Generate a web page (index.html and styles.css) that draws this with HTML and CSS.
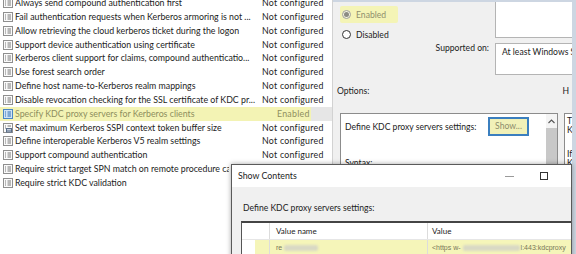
FILE: index.html
```html
<!DOCTYPE html>
<html>
<head>
<meta charset="utf-8">
<link rel="stylesheet" href="styles.css">
</head>
<body>
<div class="screen">
  <div class="list">
    <div class="rows">
      <div class="row"><svg class="ico" viewBox="0 0 10 10"><rect x="0.5" y="0.5" width="9" height="9" fill="#fafafa" stroke="#8f8f8f"/><path d="M2 3h1M2 5h1M2 7h1M4.5 3h3.5M4.5 5h3.5M4.5 7h3.5" stroke="#777"/></svg><span class="name">Always send compound authentication first</span><span class="state">Not configured</span></div>
      <div class="row"><svg class="ico" viewBox="0 0 10 10"><rect x="0.5" y="0.5" width="9" height="9" fill="#fafafa" stroke="#8f8f8f"/><path d="M2 3h1M2 5h1M2 7h1M4.5 3h3.5M4.5 5h3.5M4.5 7h3.5" stroke="#777"/></svg><span class="name">Fail authentication requests when Kerberos armoring is not ...</span><span class="state">Not configured</span></div>
      <div class="row"><svg class="ico" viewBox="0 0 10 10"><rect x="0.5" y="0.5" width="9" height="9" fill="#fafafa" stroke="#8f8f8f"/><path d="M2 3h1M2 5h1M2 7h1M4.5 3h3.5M4.5 5h3.5M4.5 7h3.5" stroke="#777"/></svg><span class="name">Allow retrieving the cloud kerberos ticket during the logon</span><span class="state">Not configured</span></div>
      <div class="row"><svg class="ico" viewBox="0 0 10 10"><rect x="0.5" y="0.5" width="9" height="9" fill="#fafafa" stroke="#8f8f8f"/><path d="M2 3h1M2 5h1M2 7h1M4.5 3h3.5M4.5 5h3.5M4.5 7h3.5" stroke="#777"/></svg><span class="name">Support device authentication using certificate</span><span class="state">Not configured</span></div>
      <div class="row"><svg class="ico" viewBox="0 0 10 10"><rect x="0.5" y="0.5" width="9" height="9" fill="#fafafa" stroke="#8f8f8f"/><path d="M2 3h1M2 5h1M2 7h1M4.5 3h3.5M4.5 5h3.5M4.5 7h3.5" stroke="#777"/></svg><span class="name">Kerberos client support for claims, compound authenticatio...</span><span class="state">Not configured</span></div>
      <div class="row"><svg class="ico" viewBox="0 0 10 10"><rect x="0.5" y="0.5" width="9" height="9" fill="#fafafa" stroke="#8f8f8f"/><path d="M2 3h1M2 5h1M2 7h1M4.5 3h3.5M4.5 5h3.5M4.5 7h3.5" stroke="#777"/></svg><span class="name">Use forest search order</span><span class="state">Not configured</span></div>
      <div class="row"><svg class="ico" viewBox="0 0 10 10"><rect x="0.5" y="0.5" width="9" height="9" fill="#fafafa" stroke="#8f8f8f"/><path d="M2 3h1M2 5h1M2 7h1M4.5 3h3.5M4.5 5h3.5M4.5 7h3.5" stroke="#777"/></svg><span class="name">Define host name-to-Kerberos realm mappings</span><span class="state">Not configured</span></div>
      <div class="row"><svg class="ico" viewBox="0 0 10 10"><rect x="0.5" y="0.5" width="9" height="9" fill="#fafafa" stroke="#8f8f8f"/><path d="M2 3h1M2 5h1M2 7h1M4.5 3h3.5M4.5 5h3.5M4.5 7h3.5" stroke="#777"/></svg><span class="name">Disable revocation checking for the SSL certificate of KDC pr...</span><span class="state">Not configured</span></div>
      <div class="row sel"><svg class="ico" viewBox="0 0 10 10"><rect x="0.5" y="0.5" width="9" height="9" fill="#cfe2f5" stroke="#4a86c4"/><path d="M2 3h1M2 5h1M2 7h1M4.5 3h3.5M4.5 5h3.5M4.5 7h3.5" stroke="#2f6fb3"/></svg><span class="name">Specify KDC proxy servers for Kerberos clients</span><span class="state">Enabled</span></div>
      <div class="row"><svg class="ico" viewBox="0 0 10 10"><rect x="0.5" y="0.5" width="9" height="9" fill="#fafafa" stroke="#8f8f8f"/><path d="M2 3h1M2 5h1M4.5 3h3.5" stroke="#777"/><rect x="3" y="5" width="6" height="4.5" fill="#5a6f8a"/><path d="M4 6.5h4M4 8h4" stroke="#dfe6ef" stroke-width="0.8"/></svg><span class="name">Set maximum Kerberos SSPI context token buffer size</span><span class="state">Not configured</span></div>
      <div class="row"><svg class="ico" viewBox="0 0 10 10"><rect x="0.5" y="0.5" width="9" height="9" fill="#fafafa" stroke="#8f8f8f"/><path d="M2 3h1M2 5h1M2 7h1M4.5 3h3.5M4.5 5h3.5M4.5 7h3.5" stroke="#777"/></svg><span class="name">Define interoperable Kerberos V5 realm settings</span><span class="state">Not configured</span></div>
      <div class="row"><svg class="ico" viewBox="0 0 10 10"><rect x="0.5" y="0.5" width="9" height="9" fill="#fafafa" stroke="#8f8f8f"/><path d="M2 3h1M2 5h1M2 7h1M4.5 3h3.5M4.5 5h3.5M4.5 7h3.5" stroke="#777"/></svg><span class="name">Support compound authentication</span><span class="state">Not configured</span></div>
      <div class="row"><svg class="ico" viewBox="0 0 10 10"><rect x="0.5" y="0.5" width="9" height="9" fill="#fafafa" stroke="#8f8f8f"/><path d="M2 3h1M2 5h1M2 7h1M4.5 3h3.5M4.5 5h3.5M4.5 7h3.5" stroke="#777"/></svg><span class="name short">Require strict target SPN match on remote procedure calls</span></div>
      <div class="row"><svg class="ico" viewBox="0 0 10 10"><rect x="0.5" y="0.5" width="9" height="9" fill="#fafafa" stroke="#8f8f8f"/><path d="M2 3h1M2 5h1M2 7h1M4.5 3h3.5M4.5 5h3.5M4.5 7h3.5" stroke="#777"/></svg><span class="name short">Require strict KDC validation</span></div>
    </div>
  </div>

  <div class="panel">
    <div class="sec1">
      <div class="radios">
        <div class="radio on"><span class="rb"><span class="dot"></span></span><span>Enabled</span></div>
        <div class="radio"><span class="rb"></span><span>Disabled</span></div>
      </div>
      <div class="comment"></div>
    </div>
    <div class="sec2">
      <div class="sup-label">Supported on:</div>
      <div class="sup-box">At least Windows S</div>
    </div>
    <div class="sec3">
      <span>Options:</span>
      <span class="help-label">H</span>
    </div>
    <div class="sec4">
      <div class="options">
        <div class="opt-main">
          <div class="opt-row">
            <span class="opt-label">Define KDC proxy servers settings:</span>
            <span class="show-btn">Show...</span>
          </div>
          <div class="syntax">Syntax:</div>
        </div>
        <div class="sbar">
          <div class="arrow"><svg width="7" height="5" viewBox="0 0 7 5"><path d="M0.5 4L3.5 1L6.5 4" fill="none" stroke="#555" stroke-width="1.1"/></svg></div>
          <div class="thumb"></div>
        </div>
      </div>
      <div class="help">
        <p>T</p>
        <p>K</p>
        <p class="gap">If</p>
        <p>K</p>
      </div>
    </div>
  </div>

  <div class="edge"></div>

  <div class="dialog">
    <div class="titlebar">
      <span class="title">Show Contents</span>
      <span class="min"></span>
      <span class="max"></span>
    </div>
    <div class="dbody">
      <div class="dlabel">Define KDC proxy servers settings:</div>
      <div class="table">
        <div class="thead">
          <span class="c0"></span>
          <span class="c1">Value name</span>
          <span class="c2">Value</span>
        </div>
        <div class="trow">
          <span class="c0"></span>
          <span class="c1 val">re<span class="blur b1"></span></span>
          <span class="c2 val">&lt;https w-<span class="blur b2"></span>l:443:kdcproxy</span>
        </div>
      </div>
    </div>
  </div>
</div>
</body>
</html>
```

FILE: styles.css
```css
* {
  box-sizing: border-box;
  margin: 0;
  padding: 0;
}

body {
  margin: 0;
  width: 576px;
  height: 254px;
  overflow: hidden;
  background: #fff;
  font-family: Lato, "Noto Sans", sans-serif;
  font-size: 8.8px;
  line-height: 10px;
  color: #1c1c1c;
}

.screen {
  position: relative;
  display: flex;
  width: 576px;
  height: 254px;
  overflow: hidden;
}

/* ---------- policy list ---------- */
.list {
  width: 333px;
  flex: none;
  overflow: hidden;
  background: #fff;
  border-right: 1px solid #d2d2d2;
}

.rows {
  margin-top: -3.9px;
}

.row {
  display: flex;
  align-items: center;
  height: 13.85px;
  white-space: nowrap;
}

.ico {
  width: 10px;
  height: 10px;
  flex: none;
  margin: 0 2px 0 3px;
}

.name {
  width: 247px;
  flex: none;
  overflow: hidden;
}

.name.short {
  width: 214px;
}

.state {
  flex: none;
  letter-spacing: 0.25px;
}

.row.sel {
  background: linear-gradient(90deg, #f3f3b4 0, #f3f3b4 311px, #e6e6e6 311px);
  color: #8e8e5e;
}

.row.sel .state {
  padding-left: 15px;
}

/* ---------- policy setting panel ---------- */
.panel {
  width: 239px;
  flex: none;
  background: #f0f0f0;
  border-top: 2px solid #cdd6e2;
  overflow: hidden;
  font-size: 8.6px;
}

.edge {
  width: 4px;
  flex: none;
  background: #cdd6e2;
}

.sec1 {
  display: flex;
  height: 39px;
}

.radios {
  width: 162px;
  flex: none;
  padding-top: 4px;
}

.radio {
  display: flex;
  align-items: center;
  gap: 5px;
  height: 17px;
  margin-left: 7px;
  padding-left: 2px;
  width: 58px;
}

.radio + .radio {
  margin-top: 3px;
}

.radio.on {
  background: #f4f4b6;
  color: #8f8f6c;
  border-radius: 2px;
}

.rb {
  width: 9px;
  height: 9px;
  flex: none;
  border-radius: 50%;
  border: 1px solid #333;
  background: #fff;
  display: flex;
  align-items: center;
  justify-content: center;
}

.radio.on .rb {
  border-color: #a0a09a;
  background: #f4f4e0;
}

.dot {
  width: 5px;
  height: 5px;
  border-radius: 50%;
  background: #8c8c84;
}

.comment {
  width: 77px;
  height: 36px;
  flex: none;
  background: #fff;
  border: 1px solid #b4b4b4;
  border-top: 0;
  border-right: 0;
}

.sec2 {
  display: flex;
  height: 36px;
  padding-top: 2px;
}

.sup-label {
  width: 162px;
  flex: none;
  text-align: right;
  padding-right: 6px;
}

.sup-box {
  width: 77px;
  height: 32px;
  flex: none;
  background: #fff;
  border: 1px solid #b4b4b4;
  border-right: 0;
  padding: 3px 0 0 6px;
  white-space: nowrap;
  overflow: hidden;
}

.sec3 {
  display: flex;
  justify-content: space-between;
  height: 29px;
  padding: 9px 3px 0 4px;
}

.sec4 {
  display: flex;
  padding-top: 7px;
}

.options {
  display: flex;
  width: 218px;
  height: 70px;
  margin-left: 7px;
  flex: none;
  background: #fff;
  border: 1px solid #8c8c8c;
}

.opt-main {
  flex: 1;
  padding: 3px 0 0 4px;
  white-space: nowrap;
}

.opt-row {
  display: flex;
  align-items: center;
  height: 19px;
}

.opt-label {
  width: 143px;
  flex: none;
}

.show-btn {
  width: 41px;
  height: 19px;
  flex: none;
  text-align: center;
  line-height: 15px;
  background: #f1f1b8;
  color: #8d8d6c;
  border: 2px solid #3b7fbf;
}

.syntax {
  margin-top: 22px;
}

.sbar {
  width: 11px;
  flex: none;
  display: flex;
  flex-direction: column;
}

.arrow {
  height: 14px;
  display: flex;
  align-items: center;
  justify-content: center;
  background: #f4f4f4;
}

.thumb {
  flex: 1;
  background: #c8c8c8;
}

.help {
  width: 8px;
  height: 70px;
  margin-left: 6px;
  flex: none;
  background: #fff;
  border: 1px solid #8c8c8c;
  border-right: 0;
  padding: 3px 0 0 2px;
  overflow: hidden;
  line-height: 9px;
}

.help .gap {
  margin-top: 15px;
}

/* ---------- Show Contents dialog ---------- */
.dialog {
  position: absolute;
  z-index: 2;
  left: 231px;
  top: 164px;
  width: 341px;
  height: 95px;
  background: #f0f0f0;
  border: 1px solid #5a5a5a;
  box-shadow: 0 0 5px rgba(0, 0, 0, 0.35);
  font-size: 8.6px;
}

.titlebar {
  display: flex;
  align-items: center;
  height: 22px;
  background: #fff;
  padding-left: 6px;
  font-size: 8.8px;
}

.title {
  flex: 1;
}

.min {
  width: 9px;
  height: 1px;
  background: #9a9a9a;
  margin-right: 26px;
}

.max {
  width: 8px;
  height: 8px;
  border: 1px solid #333;
  margin-right: 23px;
}

.dbody {
  padding: 16px 0 0 11px;
}

.table {
  margin: 8px 0 0 -2px;
  background: #fff;
  border-top: 2px solid #444;
  border-left: 1px solid #555;
  font-size: 8px;
}

.thead,
.trow {
  display: flex;
  align-items: center;
  white-space: nowrap;
}

.thead {
  height: 17px;
  border-bottom: 1px solid #e6e6e6;
}

.trow {
  height: 15px;
  background: linear-gradient(90deg, #fff 0, #fff 13px, #f5f5b9 13px);
}

.c0 {
  width: 28px;
  height: 100%;
  flex: none;
  border-right: 1px solid #dcdcdc;
}

.c1 {
  width: 158px;
  height: 100%;
  flex: none;
  display: flex;
  align-items: center;
  padding-left: 6px;
  border-right: 1px solid #dcdcdc;
}

.c2 {
  flex: 1;
  height: 100%;
  display: flex;
  align-items: center;
  padding-left: 4px;
}

.val {
  font-family: "Liberation Sans", Arial, sans-serif;
  font-size: 7px;
  color: #77775a;
}

.blur {
  display: inline-block;
  height: 6px;
  background: #d9d9c4;
  filter: blur(1.2px);
  border-radius: 2px;
}

.b1 {
  width: 34px;
  margin-left: 2px;
}

.b2 {
  width: 57px;
  margin: 0 1px 0 2px;
}
```
